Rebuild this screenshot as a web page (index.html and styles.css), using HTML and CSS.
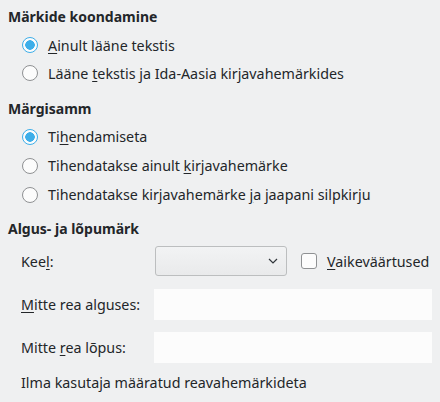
FILE: index.html
```html
<!DOCTYPE html>
<html lang="et">
<head>
<meta charset="utf-8">
<link rel="stylesheet" href="styles.css">
</head>
<body>
<div class="page">
  <div class="heading h1">Märkide koondamine</div>
  <div class="radio-row r1"><span class="radio checked"></span><span class="label"><u>A</u>inult lääne tekstis</span></div>
  <div class="radio-row r2"><span class="radio"></span><span class="label">Lääne <u>t</u>ekstis ja Ida-Aasia kirjavahemärkides</span></div>

  <div class="heading h2">Märgisamm</div>
  <div class="radio-row r3"><span class="radio checked"></span><span class="label">Ti<u>h</u>endamiseta</span></div>
  <div class="radio-row r4"><span class="radio"></span><span class="label">Tihendatakse ainult <u>k</u>irjavahemärke</span></div>
  <div class="radio-row r5"><span class="radio"></span><span class="label">Tihendatakse kirjavahemärke <u>j</u>a jaapani silpkirju</span></div>

  <div class="heading h3">Algus- ja lõpumärk</div>
  <div class="form">
    <div class="form-row keel">
      <span class="flabel">Kee<u>l</u>:</span>
      <div class="combo"><svg class="chev" width="10" height="6" viewBox="0 0 10 6"><path d="M1 1 L5 5 L9 1" fill="none" stroke="#31363b" stroke-width="1.2"/></svg></div>
      <span class="check"></span>
      <span class="clabel"><u>V</u>aikeväärtused</span>
    </div>
    <div class="form-row entry-row e1">
      <span class="flabel"><u>M</u>itte rea alguses:</span>
      <div class="entry"></div>
    </div>
    <div class="form-row entry-row e2">
      <span class="flabel">Mitte <u>r</u>ea lõpus:</span>
      <div class="entry"></div>
    </div>
    <div class="note">Ilma kasutaja määratud reavahemärkideta</div>
  </div>
</div>
</body>
</html>
```
FILE: styles.css
```css
html, body {
  margin: 0;
  padding: 0;
  background: #eff0f1;
}
body {
  font-family: "Noto Sans", "DejaVu Sans", sans-serif;
  font-size: 14.3px;
  color: #232629;
  width: 440px;
  height: 402px;
  overflow: hidden;
}
u {
  text-decoration-thickness: 1px;
  text-underline-offset: 2px;
}
.page {
  display: flex;
  flex-direction: column;
  padding: 7px 8px 0 8px;
}
.heading {
  font-weight: bold;
  font-size: 14px;
  height: 20px;
  line-height: 20px;
}
.radio-row {
  display: flex;
  align-items: center;
  height: 28px;
  padding-left: 14px;
}
.r1 { margin-top: 4px; }
.h2 { margin-top: 12px; }
.r3 { margin-top: 3px; height: 29px; }
.r4, .r5 { height: 29px; }
.h3 { margin-top: 10px; }
.radio {
  width: 16px;
  height: 16px;
  box-sizing: border-box;
  border-radius: 50%;
  border: 1px solid #8f9193;
  background: #fcfcfc;
  flex: none;
}
.radio.checked {
  border: 1px solid #3daee9;
  background: radial-gradient(circle, #3daee9 0, #3daee9 4.5px, #fcfcfc 5px);
}
.label {
  margin-left: 10px;
}
.form {
  display: flex;
  flex-direction: column;
  padding-left: 13px;
  margin-top: 7px;
}
.form-row {
  display: flex;
  align-items: center;
}
.flabel {
  width: 133px;
  flex: none;
}
.keel {
  height: 30px;
}
.keel .flabel { width: 134px; }
.combo {
  width: 132px;
  height: 30px;
  box-sizing: border-box;
  border: 1px solid #bcbebf;
  border-radius: 3px;
  background: linear-gradient(#f2f3f4, #e9eaeb);
  display: flex;
  align-items: center;
  justify-content: flex-end;
  padding-right: 8px;
}
.check {
  width: 16px;
  height: 16px;
  box-sizing: border-box;
  border: 1px solid #8f9193;
  border-radius: 3px;
  background: #fcfcfc;
  margin-left: 14px;
  flex: none;
}
.clabel {
  margin-left: 10px;
}
.entry-row {
  height: 31px;
}
.e1 { margin-top: 13px; }
.e2 { margin-top: 12px; }
.entry {
  width: 278px;
  height: 31px;
  background: #fcfcfc;
}
.note {
  margin-top: 10px;
  height: 20px;
  line-height: 20px;
}
```
